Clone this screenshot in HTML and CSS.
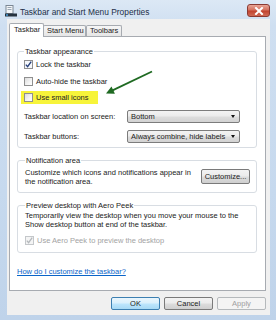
FILE: index.html
```html
<!DOCTYPE html>
<html>
<head>
<meta charset="utf-8">
<link rel="stylesheet" href="styles.css">
</head>
<body>
<div class="window">
  <div class="titlebar">
    <svg class="app-icon" width="12" height="12" viewBox="0 0 12 12">
      <rect x="1" y="0.5" width="7" height="8" fill="#f4f6f8" stroke="#7b8794" stroke-width="1"/>
      <rect x="2.5" y="2" width="4" height="1" fill="#9aa7b4"/>
      <rect x="2.5" y="4" width="4" height="1" fill="#9aa7b4"/>
      <rect x="0" y="8.5" width="12" height="3" fill="#26323f"/>
      <rect x="1" y="9.3" width="2" height="1.4" fill="#4aa3e0"/>
    </svg>
    <span class="title">Taskbar and Start Menu Properties</span>
    <div class="close-btn">
      <svg width="10" height="8" viewBox="0 0 10 8"><path d="M2 1 L8 7 M8 1 L2 7" stroke="#fff" stroke-width="2" stroke-linecap="square"/></svg>
    </div>
  </div>
  <div class="client">
    <div class="tabs">
      <div class="tab tab-active">Taskbar</div>
      <div class="tab">Start Menu</div>
      <div class="tab">Toolbars</div>
    </div>
    <div class="panel">
      <fieldset class="group group-appearance">
        <legend>Taskbar appearance</legend>
        <div class="check-row">
          <span class="checkbox checked">
            <svg width="9" height="9" viewBox="0 0 9 9"><path d="M1.8 4.6 L3.6 6.6 L7.2 1.6" fill="none" stroke="#27407a" stroke-width="1.4"/></svg>
          </span>
          <span>Lock the taskbar</span>
        </div>
        <div class="check-row row-autohide">
          <span class="checkbox"></span>
          <span>Auto-hide the taskbar</span>
        </div>
        <div class="check-row row-small highlight">
          <span class="checkbox"></span>
          <span>Use small icons</span>
        </div>
        <div class="combo-row row-location">
          <span class="combo-label">Taskbar location on screen:</span>
          <div class="combo"><span>Bottom</span><span class="combo-arrow"></span></div>
        </div>
        <div class="combo-row row-buttons">
          <span class="combo-label">Taskbar buttons:</span>
          <div class="combo"><span>Always combine, hide labels</span><span class="combo-arrow"></span></div>
        </div>
      </fieldset>

      <fieldset class="group group-notify">
        <legend>Notification area</legend>
        <div class="notify-row">
          <p class="desc">Customize which icons and notifications appear in<br>the notification area.</p>
          <div class="btn btn-customize">Customize...</div>
        </div>
      </fieldset>

      <fieldset class="group group-peek">
        <legend>Preview desktop with Aero Peek</legend>
        <p class="desc peek-desc">Temporarily view the desktop when you move your mouse to the<br>Show desktop button at end of the taskbar.</p>
        <div class="check-row row-peek disabled">
          <span class="checkbox checked">
            <svg width="9" height="9" viewBox="0 0 9 9"><path d="M1.8 4.6 L3.6 6.6 L7.2 1.6" fill="none" stroke="#b4b8bc" stroke-width="1.3"/></svg>
          </span>
          <span>Use Aero Peek to preview the desktop</span>
        </div>
      </fieldset>

      <a class="help-link" href="#">How do I customize the taskbar?</a>
    </div>
    <div class="buttons">
      <div class="btn btn-default">OK</div>
      <div class="btn">Cancel</div>
      <div class="btn btn-disabled">Apply</div>
    </div>
  </div>
  <svg class="arrow" width="276" height="320" viewBox="0 0 276 320">
    <line x1="152" y1="71.5" x2="112" y2="90.6" stroke="#1f6a22" stroke-width="1.8"/>
    <polygon points="106,93.5 114.9,93.7 111.5,86.4" fill="#1f6a22"/>
  </svg>
</div>
</body>
</html>
```

FILE: styles.css
```css
* { box-sizing: border-box; }

html, body {
  margin: 0;
  padding: 0;
}

body {
  width: 276px;
  height: 320px;
  overflow: hidden;
  font-family: "Liberation Sans", Arial, sans-serif;
  font-size: 7.5px;
  color: #222;
}

.window {
  position: relative;
  width: 276px;
  height: 320px;
  display: flex;
  flex-direction: column;
  background: linear-gradient(180deg, #dce8f5 0%, #cfdff1 8%, #c6d9ee 60%, #bfd3ea 100%);
}

.titlebar {
  height: 19px;
  display: flex;
  align-items: flex-start;
  padding-left: 5px;
  flex: none;
}

.app-icon {
  margin-top: 5px;
  flex: none;
}

.title {
  margin-left: 3px;
  margin-top: 7px;
  font-size: 8.4px;
  line-height: 10px;
  color: #1e3048;
}

.close-btn {
  margin-left: auto;
  margin-right: 6px;
  margin-top: 4px;
  width: 23px;
  height: 13px;
  border: 1px solid #8a3a33;
  border-radius: 3px;
  background: linear-gradient(180deg, #e8a596 0%, #d4725f 45%, #c2432f 55%, #cf6a55 100%);
  display: flex;
  align-items: center;
  justify-content: center;
  flex: none;
}

.client {
  flex: 1;
  margin: 0 6px 0 7px;
  background: #f0f0f0;
  padding: 4px 4px 5px 2px;
  display: flex;
  flex-direction: column;
  height: 296px;
  flex: none;
}

.tabs {
  height: 14px;
  margin-bottom: -1px;
  display: flex;
  align-items: flex-end;
  flex: none;
}

.tab {
  height: 11px;
  margin-bottom: 1px;
  padding: 0 3px;
  border: 1px solid #a7abb1;
  border-bottom: none;
  border-radius: 2px 2px 0 0;
  background: linear-gradient(180deg, #f6f6f6 0%, #e6e6e6 100%);
  line-height: 10px;
  font-size: 7.5px;
  margin-left: -1px;
  white-space: nowrap;
}

.tab:nth-child(2) { width: 43px; }
.tab:nth-child(3) { width: 36px; margin-left: 0; }

.tab-active {
  position: relative;
  z-index: 1;
  height: 14px;
  margin-bottom: 0;
  margin-left: 0;
  width: 35px;
  padding: 0 4px;
  background: #fff;
  line-height: 12px;
}

.panel {
  height: 255px;
  flex: none;
  border: 1px solid #a7abb1;
  background: #fff;
  padding: 0 8px 0 7px;
  display: flex;
  flex-direction: column;
}

.group {
  margin: 0;
  min-width: 0;
  border: 1px solid #d8dde3;
  border-radius: 3px;
  display: flex;
  flex-direction: column;
}

.group legend {
  padding: 0 1px;
  line-height: 9px;
  font-size: 7.5px;
  color: #222;
}

.group-appearance {
  margin-top: 10px;
  padding: 2px 8px 4px 6px;
}

.group-notify {
  margin-top: 8px;
  padding: 3px 6px 6px 7px;
}

.group-peek {
  margin-top: 8px;
  padding: 1px 6px 6px 7px;
}

.check-row {
  display: flex;
  align-items: center;
  height: 12px;
  white-space: nowrap;
}

.row-autohide { margin-top: 5px; }

.row-small {
  margin-top: 4px;
  height: 13px;
}

.highlight {
  margin-left: -3px;
  padding-left: 3px;
  width: 77px;
  background: #f7f43a;
}

.checkbox {
  width: 9px;
  height: 9px;
  border: 1px solid #8f8f8f;
  background: linear-gradient(135deg, #dcdcdc 0%, #f4f4f4 60%, #ffffff 100%);
  margin-right: 3px;
  display: flex;
  align-items: center;
  justify-content: center;
  flex: none;
  position: relative;
}

.checkbox svg {
  display: block;
  flex: none;
  margin: -1px;
}

.checkbox.checked {
  background: #f6f8fb;
}

.disabled { color: #a3a3a3; }
.disabled .checkbox { border-color: #c4c7ca; background: #f4f4f4; }

.row-peek {
  margin-top: 6px;
  height: 11px;
}

.combo-row {
  display: flex;
  align-items: center;
  height: 13px;
  white-space: nowrap;
}

.row-location { margin-top: 6px; }
.row-buttons { margin-top: 7px; }

.combo-label {
  width: 103px;
  flex: none;
}

.combo {
  width: 113px;
  height: 13px;
  border: 1px solid #7c7c7c;
  border-radius: 2px;
  background: linear-gradient(180deg, #f3f3f3 0%, #ebebeb 48%, #dddddd 52%, #d2d2d2 100%);
  display: flex;
  align-items: center;
  padding: 0 4px 0 3px;
  flex: none;
}

.combo span:first-child {
  flex: 1;
}

.combo-arrow {
  width: 0;
  height: 0;
  border-left: 2.5px solid transparent;
  border-right: 2.5px solid transparent;
  border-top: 3px solid #111;
  flex: none;
}

.notify-row {
  display: flex;
  align-items: flex-start;
}

.desc {
  margin: 0;
  line-height: 9px;
  white-space: nowrap;
  flex: 1;
}

.btn {
  width: 49px;
  height: 13px;
  border: 1px solid #7a7a7a;
  border-radius: 2px;
  background: linear-gradient(180deg, #f3f3f3 0%, #ebebeb 48%, #dddddd 52%, #cfcfcf 100%);
  display: flex;
  align-items: center;
  justify-content: center;
  flex: none;
  white-space: nowrap;
}

.btn-customize {
  height: 15px;
  margin-top: 1px;
}

.help-link {
  margin-top: 14px;
  line-height: 9px;
  color: #0a64c8;
  text-decoration: underline;
  align-self: flex-start;
}

.buttons {
  display: flex;
  justify-content: flex-end;
  gap: 4px;
  margin-top: 6px;
  flex: none;
}

.btn-default {
  border-color: #3c7fb1;
  background: linear-gradient(180deg, #eaf6fd 0%, #d9f0fc 48%, #bee6fd 52%, #a7d9f5 100%);
}

.btn-disabled {
  color: #a0a0a0;
  border-color: #b5b9bc;
  background: #f4f4f4;
}

.arrow {
  position: absolute;
  left: 0;
  top: 0;
  pointer-events: none;
}
```
